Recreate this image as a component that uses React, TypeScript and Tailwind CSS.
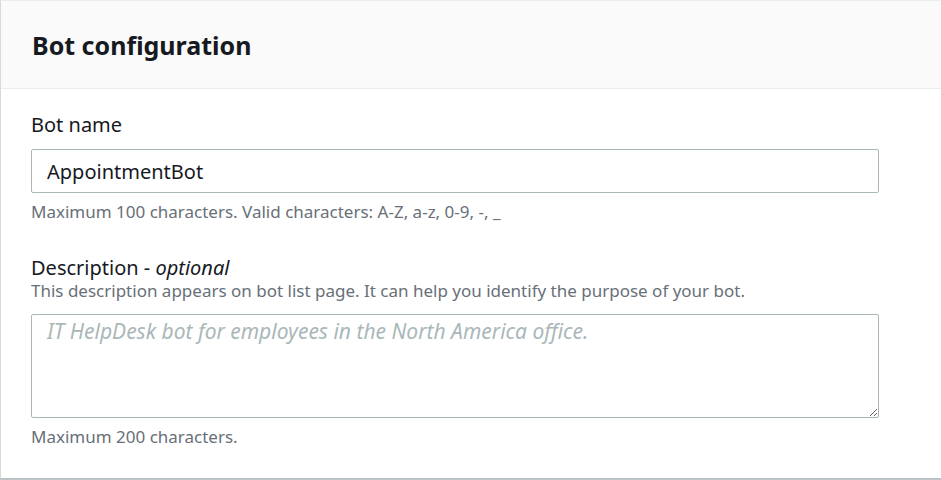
export default function App() {
  return (
    <div className="w-[941px] h-[480px] overflow-hidden bg-white font-['Noto_Sans',sans-serif]">
      <div className="w-[960px] border-t border-t-[#eaeded] border-l border-l-[#d5dbdb] border-b border-b-[#b8c0c4] bg-white shadow-[0_1px_1px_0_rgba(0,28,36,0.25)]">
        {/* header */}
        <div className="h-[88px] bg-[#fafafa] border-b border-[#eaeded] flex items-center pl-[31px]">
          <h2 className="text-[25px] leading-[32px] font-bold text-[#16191f]">Bot configuration</h2>
        </div>

        {/* body */}
        <div className="pl-[30px] pt-[23px] pb-[29px]">
          <div className="w-[848px]">
            <label className="block text-[20px] leading-[26px] text-[#16191f]">Bot name</label>
            <input
              className="mt-[11px] block w-full h-[44px] border border-[#aab7b8] rounded-[2px] px-[15px] text-[20px] text-[#16191f] outline-none bg-white"
              defaultValue="AppointmentBot"
            />
            <p className="mt-[7px] text-[17px] leading-[24px] text-[#687078]">
              Maximum 100 characters. Valid characters: A-Z, a-z, 0-9, -, _
            </p>
          </div>

          <div className="w-[848px] mt-[32px]">
            <label className="block text-[20px] leading-[24px] text-[#16191f]">
              Description - <i>optional</i>
            </label>
            <p className="mt-[1px] text-[17px] leading-[20px] text-[#687078]">
              This description appears on bot list page. It can help you identify the purpose of your bot.
            </p>
            <textarea
              className="mt-[13px] block w-full h-[104px] border border-[#aab7b8] rounded-[2px] px-[15px] pt-[3px] text-[21px] leading-[26px] text-[#16191f] placeholder:italic placeholder:text-[#aab7b8] outline-none"
              placeholder="IT HelpDesk bot for employees in the North America office."
            />
            <p className="mt-[7px] text-[17px] leading-[24px] text-[#687078]">Maximum 200 characters.</p>
          </div>
        </div>
      </div>
    </div>
  );
}
